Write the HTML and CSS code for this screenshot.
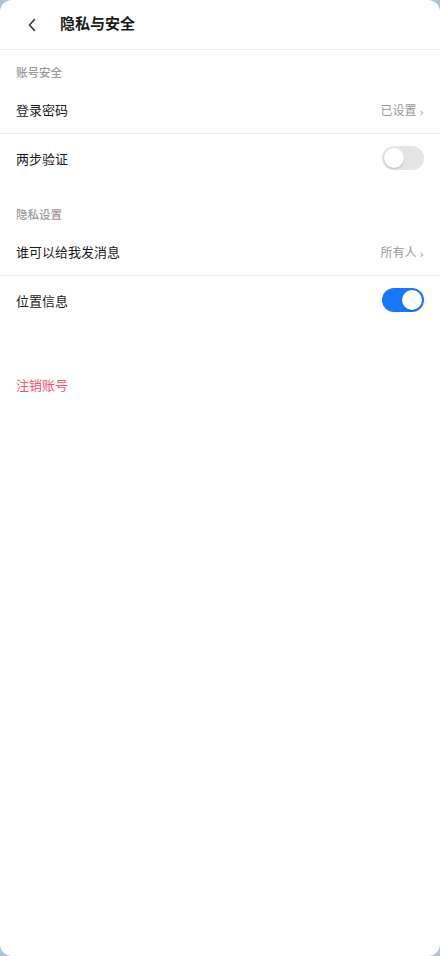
FILE: index.html
```html
<!DOCTYPE html>
<html lang="zh">
<head>
<meta charset="utf-8">
<link rel="stylesheet" href="styles.css">
</head>
<body>
<div class="screen">
  <header class="topbar">
    <button class="back" aria-label="返回">
      <svg width="10" height="14" viewBox="0 0 10 14"><path d="M7.5 1.5 L2.5 7 L7.5 12.5" fill="none" stroke="#333" stroke-width="1.6" stroke-linecap="round" stroke-linejoin="round"/></svg>
    </button>
    <h1 class="title">隐私与安全</h1>
  </header>

  <section class="group">
    <div class="group-title">账号安全</div>
    <div class="row bordered">
      <span class="label">登录密码</span>
      <span class="value">已设置<span class="chev">›</span></span>
    </div>
    <div class="row">
      <span class="label">两步验证</span>
      <span class="toggle"><span class="knob"></span></span>
    </div>
  </section>

  <section class="group">
    <div class="group-title">隐私设置</div>
    <div class="row bordered">
      <span class="label">谁可以给我发消息</span>
      <span class="value">所有人<span class="chev">›</span></span>
    </div>
    <div class="row">
      <span class="label">位置信息</span>
      <span class="toggle on"><span class="knob"></span></span>
    </div>
  </section>

  <div class="danger">注销账号</div>
</div>
</body>
</html>
```

FILE: styles.css
```css
* { box-sizing: border-box; }
html, body { margin: 0; padding: 0; }
body {
  background: #a9c6dd;
  font-family: "Noto Sans CJK SC", "Noto Sans", sans-serif;
  width: 440px;
  height: 956px;
}
.screen {
  background: #fff;
  width: 440px;
  height: 956px;
  border-radius: 12px;
  overflow: hidden;
}
.topbar {
  height: 50px;
  display: flex;
  align-items: center;
  border-bottom: 1px solid #ebebeb;
  padding-left: 16px;
}
.back {
  width: 32px;
  height: 32px;
  border: 0;
  background: none;
  padding: 0;
  display: flex;
  align-items: center;
  justify-content: center;
  margin-right: 12px;
}
.title {
  margin: 0;
  font-size: 15px;
  font-weight: 700;
  color: #1a1a1a;
  line-height: 22px;
  margin-top: -4px;
}
.group { margin-bottom: 10px; }
.group-title {
  padding: 15px 16px 0;
  height: 36px;
  font-size: 11.5px;
  line-height: 14px;
  font-weight: 500;
  color: #999;
}
.row {
  height: 48px;
  display: flex;
  align-items: center;
  justify-content: space-between;
  padding: 0 16px;
}
.row.bordered { border-bottom: 1px solid #ebebeb; }
.label {
  font-size: 13px;
  color: #1a1a1a;
}
.value {
  font-size: 12px;
  color: #999;
  display: flex;
  align-items: baseline;
}
.chev {
  font-family: "DejaVu Sans", sans-serif;
  font-size: 11px;
  margin-left: 3px;
  color: #999;
  position: relative;
  top: 1px;
}
.toggle {
  width: 42px;
  height: 24px;
  border-radius: 12px;
  background: #e5e5e5;
  padding: 2px;
  display: flex;
}
.toggle .knob {
  width: 20px;
  height: 20px;
  border-radius: 50%;
  background: #fff;
  box-shadow: 0 1px 2px rgba(0,0,0,0.2);
}
.toggle.on { background: #1677ff; justify-content: flex-end; }
.danger {
  margin-top: 40px;
  height: 40px;
  display: flex;
  align-items: center;
  padding: 0 16px;
  font-size: 13px;
  color: #ff4d6a;
}
```
